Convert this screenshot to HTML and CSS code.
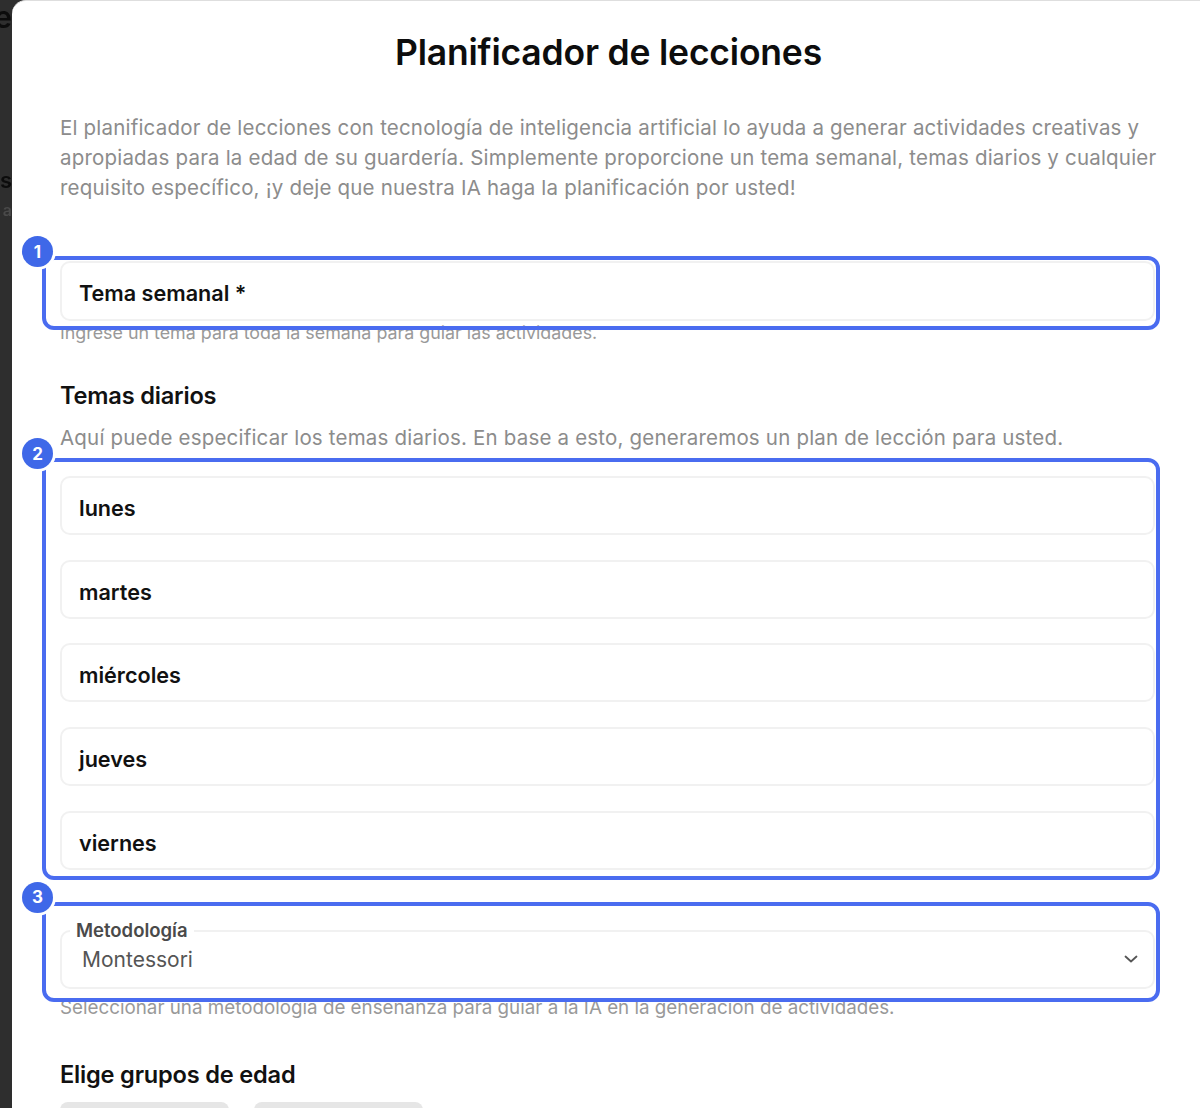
FILE: index.html
```html
<!DOCTYPE html>
<html lang="es">
<head>
<meta charset="utf-8">
<title>Planificador de lecciones</title>
<link rel="stylesheet" href="styles.css">
</head>
<body>
<div class="page">
  <aside class="backdrop">
    <span class="bd-e">e</span>
    <span class="bd-s">s</span>
    <span class="bd-a">a</span>
  </aside>
  <main class="modal">
    <h1 class="title">Planificador de lecciones</h1>
    <p class="intro">El planificador de lecciones con tecnología de inteligencia artificial lo ayuda a generar actividades creativas y apropiadas para la edad de su guardería. Simplemente proporcione un tema semanal, temas diarios y cualquier requisito específico, ¡y deje que nuestra IA haga la planificación por usted!</p>

    <div class="zone zone-one">
      <div class="mark mark-one"><span class="badge">1</span></div>
      <div class="field">Tema semanal *</div>
    </div>
    <p class="hint">Ingrese un tema para toda la semana para guiar las actividades.</p>

    <h2 class="heading heading-days">Temas diarios</h2>
    <p class="sub">Aquí puede especificar los temas diarios. En base a esto, generaremos un plan de lección para usted.</p>

    <div class="zone zone-two">
      <div class="mark mark-two"><span class="badge">2</span></div>
      <div class="field">lunes</div>
      <div class="field">martes</div>
      <div class="field">miércoles</div>
      <div class="field">jueves</div>
      <div class="field">viernes</div>
    </div>

    <div class="zone zone-three">
      <div class="mark mark-three"><span class="badge">3</span></div>
      <div class="field select">
        <span class="legend">Metodología</span>
        <span class="value">Montessori</span>
        <svg class="chevron" viewBox="0 0 16 16" width="16" height="16" aria-hidden="true"><path d="M2.5 5.5 8 10.5l5.500-5" fill="none" stroke="#555" stroke-width="1.8" stroke-linecap="round" stroke-linejoin="round"/></svg>
      </div>
    </div>
    <p class="hint hint-method">Seleccionar una metodología de enseñanza para guiar a la IA en la generación de actividades.</p>

    <h2 class="heading heading-ages">Elige grupos de edad</h2>
    <div class="chips"><span class="chip"></span><span class="chip"></span></div>
  </main>
</div>
</body>
</html>
```
FILE: styles.css
```css
* { box-sizing: border-box; }
html, body { margin: 0; height: 100%; overflow: hidden; background: #2e2e2e; }
body { font-family: Inter, "Liberation Sans", sans-serif; color: #111; }
.page { display: flex; height: 1108px; overflow: hidden; }
.backdrop { position: relative; width: 12px; flex: none; background: #2e2e2e; overflow: hidden; color: #111; filter: blur(.5px); }
.backdrop span { position: absolute; right: 0; font-weight: 600; }
.bd-e { top: 2px; font-size: 30px; line-height: 30px; color: #0c0c0c; }
.bd-s { top: 168px; font-size: 22px; line-height: 24px; color: #0c0c0c; }
.bd-a { top: 200px; font-size: 16px; line-height: 20px; color: #4a4a4a; }
.modal { flex: 1; min-width: 0; background: #fff; border-top: 1px solid #dedede; border-top-left-radius: 14px; padding: 0 45px 0 48px; overflow: hidden; }
.title { margin: 0; height: 103px; display: flex; align-items: center; justify-content: center; padding: 0 0 0 2px; font-size: 35.500px; font-weight: 600; letter-spacing: -.2px; color: #0d0d0d; }
.intro { margin: 9px -4px 0 0; font-size: 20.500px; letter-spacing: .19px; line-height: 30px; color: #8c8c8c; }
.zone { position: relative; }
.zone-one { margin-top: 58px; }
.zone-two { margin-top: 23px; display: flex; flex-direction: column; gap: 24.700px; }
.zone-three { margin-top: 60px; }
.field { height: 59px; display: flex; align-items: center; padding: 5px 0 0 17px; background: #fff; border: 2px solid #f1f1f1; border-radius: 10px; font-size: 21.600px; font-weight: 600; color: #111; }
.zone-one .field { height: 60px; padding-top: 4px; }
.select { position: relative; font-weight: 400; padding: 0 14px 0 17px; justify-content: space-between; }
.legend { position: absolute; left: 8px; top: -13px; padding: 0 6px; background: #fff; font-size: 18.500px; line-height: 22px; font-weight: 600; color: #4a4a4a; }
.value { margin-left: 3px; font-size: 21px; color: #555; }
.mark { position: absolute; z-index: 2; border: 4px solid #4a6cf0; border-radius: 12px; pointer-events: none; left: -18px; right: -5px; }
.mark-one { top: -5px; bottom: -9px; }
.mark-two { top: -18px; bottom: -10px; }
.mark-three { top: -28px; bottom: -13px; }
.badge { position: absolute; left: -24px; top: -24px; width: 31px; height: 31px; display: flex; align-items: center; justify-content: center; border-radius: 50%; background: #3f68e8; box-shadow: 0 0 0 3px #fff; color: #fff; font-size: 17px; font-weight: 700; }
.hint { margin: 0; height: 24px; font-size: 17.850px; line-height: 24px; color: #999; }
.hint-method { margin-top: 7px; font-size: 18.800px; }
.heading { margin: 0; font-size: 23.600px; line-height: 30px; font-weight: 600; letter-spacing: -.2px; color: #111; }
.heading-days { margin-top: 36px; }
.heading-ages { margin-top: 40px; }
.sub { margin: 12px 0 0; font-size: 20.500px; letter-spacing: .19px; line-height: 30px; color: #8c8c8c; }
.chips { display: flex; gap: 25px; margin-top: 12px; }
.chip { width: 169px; height: 40px; background: #e6e6e6; border-radius: 8px; }
```
